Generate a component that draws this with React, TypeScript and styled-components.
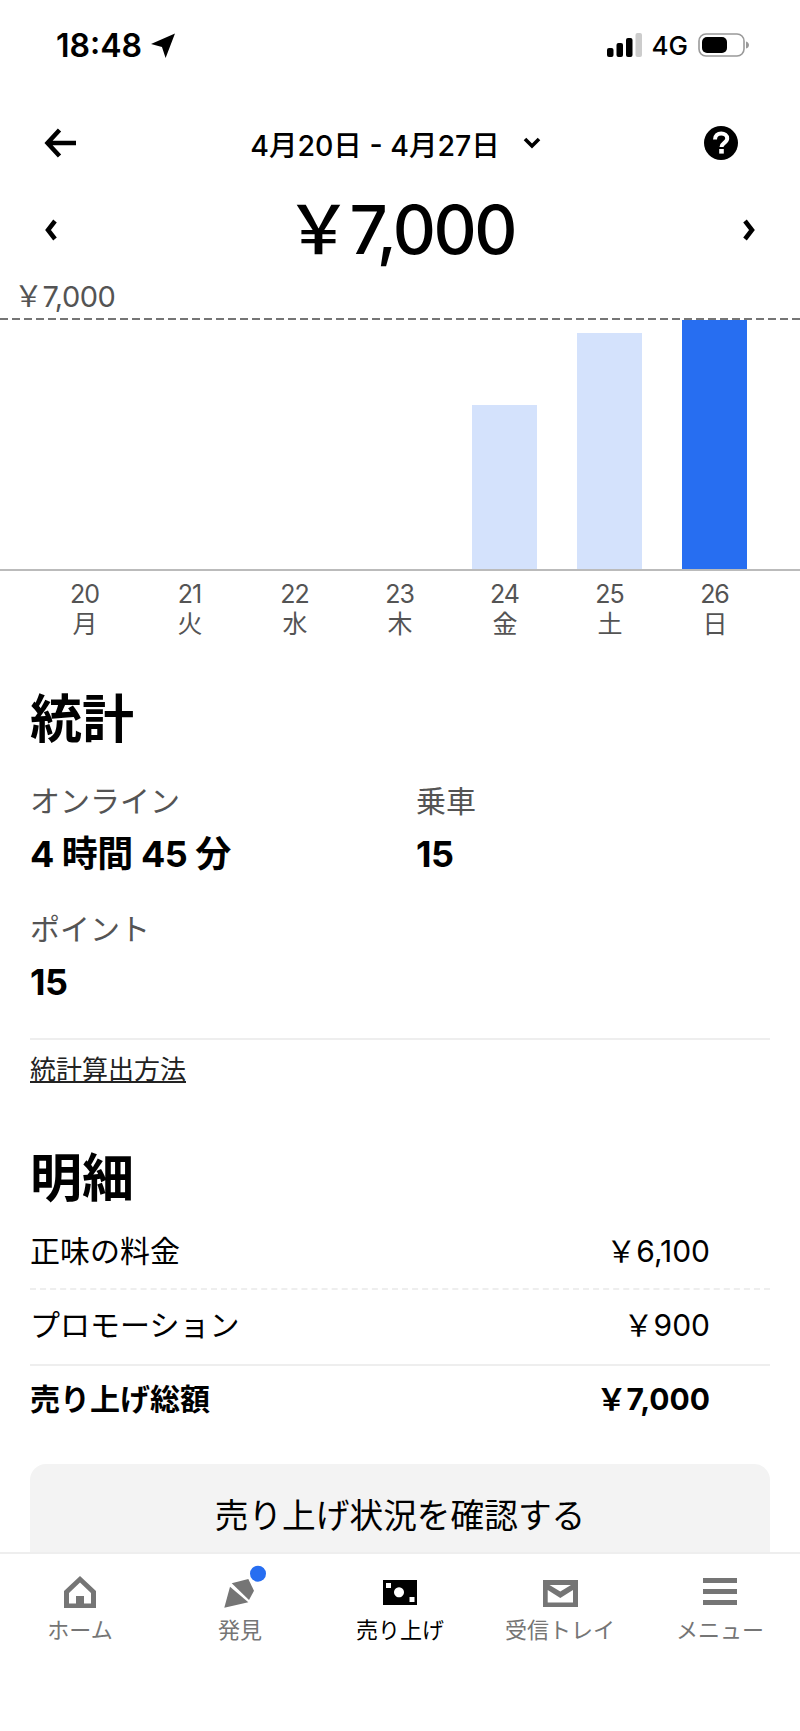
import styled, { createGlobalStyle } from "styled-components";

const YEN = "\uFFE5";
const days = [
  { num: "20", label: "月", value: 0, active: false },
  { num: "21", label: "火", value: 0, active: false },
  { num: "22", label: "水", value: 0, active: false },
  { num: "23", label: "木", value: 0, active: false },
  { num: "24", label: "金", value: 164, active: false },
  { num: "25", label: "土", value: 236, active: false },
  { num: "26", label: "日", value: 249, active: true },
];

const GlobalStyle = createGlobalStyle`
  html, body {
    margin: 0;
    padding: 0;
    background: #fff;
  }
  body {
    font-family: Inter, "Noto Sans CJK JP", sans-serif;
    color: #000;
  }
`;

function HomeIcon() {
  return (
    <svg width="32" height="40" viewBox="0 0 32 40">
      <path fillRule="evenodd" fill="#757575" d="M16 6 32 21V38H0V21ZM16 12.500 5 23V33.500H12V26H20V33.500H27V23Z" />
    </svg>
  );
}

function DiscoverIcon() {
  return (
    <svg width="52" height="46" viewBox="0 0 52 46">
      <path fill="#757575" d="M17.700 19.300 34.300 15 40 26.700 35 36Z" />
      <path fill="#757575" d="M16 22.700 34.300 38.300 10.300 43.700Z" />
      <circle cx="44" cy="9.700" r="8" fill="#276ef1" />
    </svg>
  );
}

function EarningsIcon() {
  return (
    <svg width="34" height="40" viewBox="0 0 34 40">
      <path
        fillRule="evenodd"
        d="M0 10H34V35H0ZM3 13V18H8V13ZM16 17.300a5 5 0 1 0 .01 0ZM26.500 27V32H31.500V27Z"
      />
    </svg>
  );
}

function InboxIcon() {
  return (
    <svg width="35" height="40" viewBox="0 0 35 40">
      <path
        fillRule="evenodd"
        fill="#757575"
        d="M0 10H35V37H0ZM6.500 15 17.300 21.500 28 15ZM4.700 20V32.500H30V20L17.300 28Z"
      />
    </svg>
  );
}

function MenuIcon() {
  return (
    <svg width="34" height="40" viewBox="0 0 34 40">
      <path fill="#757575" d="M0 8H34V13H0ZM0 19H34V24H0ZM0 30H34V35H0Z" />
    </svg>
  );
}

const navItems = [
  { label: "ホーム", icon: <HomeIcon /> },
  { label: "発見", icon: <DiscoverIcon /> },
  { label: "売り上げ", icon: <EarningsIcon />, active: true },
  { label: "受信トレイ", icon: <InboxIcon /> },
  { label: "メニュー", icon: <MenuIcon /> },
];

export default function App() {
  return (
    <Page>
      <GlobalStyle />
      <StatusBar>
        <Clock>
          18:48
          <svg width="26" height="25" viewBox="0 0 24 24">
            <path d="M23.500 .5 .5 10.500 11 13.500 14.500 24Z" />
          </svg>
        </Clock>
        <StatusRight>
          <svg width="35" height="24" viewBox="0 0 35 24">
            <rect x="0" y="15" width="6.500" height="9" rx="2" />
            <rect x="9.500" y="10" width="6.500" height="14" rx="2" />
            <rect x="19" y="5" width="6.500" height="19" rx="2" />
            <rect x="28.500" y="0" width="6.500" height="24" rx="2" fill="#ccc" />
          </svg>
          <NetworkLabel>4G</NetworkLabel>
          <svg width="52" height="24" viewBox="0 0 52 24">
            <rect x="1" y="1" width="45" height="22" rx="7" fill="none" stroke="#999" strokeWidth="1.6" />
            <rect x="4" y="4" width="25" height="16" rx="5" />
            <path d="M48 8.500c2 .5 3 2 3 3.500s-1 3-3 3.500Z" fill="#999" />
          </svg>
        </StatusRight>
      </StatusBar>

      <Header>
        <svg width="32" height="30" viewBox="0 0 32 30">
          <path d="M15.500 2 3.500 15 15.500 28M5 15H32" fill="none" stroke="#000" strokeWidth="4.500" />
        </svg>
        <DateRange>
          4月20日 - 4月27日
          <svg width="18" height="12" viewBox="0 0 18 12">
            <path d="M2 2 9 9 16 2" fill="none" stroke="#000" strokeWidth="3.600" />
          </svg>
        </DateRange>
        <svg width="36" height="36" viewBox="0 0 36 36">
          <circle cx="18" cy="18" r="17" />
          <path d="M12 14.500c0-3.800 2.700-6 6.200-6 3.400 0 6 2.100 6 5 0 4.300-5.700 4.500-5.700 8.500" fill="none" stroke="#fff" strokeWidth="4" />
          <rect x="16.200" y="24" width="4.600" height="4.600" fill="#fff" />
        </svg>
      </Header>

      <AmountRow>
        <svg width="14" height="22" viewBox="0 0 14 22">
          <path d="M11 2 4 11 11 20" fill="none" stroke="#000" strokeWidth="4.500" />
        </svg>
        <Amount>{YEN}7,000</Amount>
        <svg width="14" height="22" viewBox="0 0 14 22">
          <path d="M3 2 10 11 3 20" fill="none" stroke="#000" strokeWidth="4.500" />
        </svg>
      </AmountRow>

      <ChartLabel>{YEN}7,000</ChartLabel>
      <Plot>
        {days.map((d) => (
          <BarSlot key={d.num}>
            {d.value > 0 && <Bar $height={d.value} $active={d.active} />}
          </BarSlot>
        ))}
      </Plot>
      <Axis>
        {days.map((d) => (
          <AxisCell key={d.num}>
            <span>{d.num}</span>
            <span>{d.label}</span>
          </AxisCell>
        ))}
      </Axis>

      <Section $top={51}>
        <SectionTitle>統計</SectionTitle>
        <StatsGrid>
          <Stat>
            <StatLabel>オンライン</StatLabel>
            <StatValue>4 時間 45 分</StatValue>
          </Stat>
          <Stat>
            <StatLabel>乗車</StatLabel>
            <StatValue>15</StatValue>
          </Stat>
          <Stat>
            <StatLabel>ポイント</StatLabel>
            <StatValue>15</StatValue>
          </Stat>
        </StatsGrid>
        <Divider />
        <StatsLink>統計算出方法</StatsLink>
      </Section>

      <Section $top={61}>
        <SectionTitle>明細</SectionTitle>
        <Breakdown>
          <BreakdownRow $height={73} $line="dashed">
            <span>正味の料金</span>
            <span>{YEN}6,100</span>
          </BreakdownRow>
          <BreakdownRow $height={76} $line="solid">
            <span>プロモーション</span>
            <span>{YEN}900</span>
          </BreakdownRow>
          <BreakdownRow $height={69} $bold>
            <span>売り上げ総額</span>
            <span>{YEN}7,000</span>
          </BreakdownRow>
        </Breakdown>
        <StatusButton>売り上げ状況を確認する</StatusButton>
      </Section>

      <BottomNav>
        {navItems.map((item) => (
          <NavItem key={item.label} $active={item.active}>
            <NavIcon>{item.icon}</NavIcon>
            {item.label}
          </NavItem>
        ))}
      </BottomNav>
    </Page>
  );
}

const Page = styled.div`
  position: relative;
  width: 800px;
  height: 1731px;
  overflow: hidden;
  background: #fff;
`;

const StatusBar = styled.div`
  display: flex;
  align-items: center;
  justify-content: space-between;
  height: 90px;
  padding: 0 50px 0 56px;
`;

const Clock = styled.div`
  display: flex;
  align-items: center;
  gap: 8px;
  font-size: 32px;
  font-weight: 600;
`;

const StatusRight = styled.div`
  display: flex;
  align-items: center;
  gap: 10px;
`;

const NetworkLabel = styled.span`
  font-size: 26px;
  font-weight: 500;
`;

const Header = styled.div`
  display: flex;
  align-items: center;
  justify-content: space-between;
  height: 106px;
  padding: 0 61px 0 44px;
`;

const DateRange = styled.div`
  display: flex;
  align-items: center;
  gap: 23px;
  margin-left: 12px;
  font-size: 28.5px;
  font-weight: 500;
`;

const AmountRow = styled.div`
  display: flex;
  align-items: center;
  justify-content: space-between;
  height: 68px;
  padding: 0 44px;
`;

const Amount = styled.div`
  font-size: 67px;
  font-weight: 500;
  line-height: 68px;
  letter-spacing: -2.5px;
`;

const ChartLabel = styled.div`
  height: 38px;
  padding: 16px 0 0 14px;
  font-size: 29px;
  line-height: 34px;
  letter-spacing: -0.5px;
  color: #545454;
`;

const Plot = styled.div`
  display: grid;
  grid-template-columns: repeat(7, 105px);
  align-items: end;
  height: 249px;
  padding: 2px 0 0 32px;
  border-bottom: 2px solid #bbb;
  background: repeating-linear-gradient(90deg, #757575 0 8px, transparent 8px 12px) top / 100% 2px no-repeat;
`;

const BarSlot = styled.div`
  display: flex;
  justify-content: center;
`;

const Bar = styled.div<{ $height: number; $active: boolean }>`
  width: 65px;
  height: ${(p) => p.$height}px;
  background: ${(p) => (p.$active ? "#276ef1" : "#d4e2fc")};
`;

const Axis = styled.div`
  display: grid;
  grid-template-columns: repeat(7, 105px);
  padding: 8px 0 0 32px;
`;

const AxisCell = styled.div`
  display: flex;
  flex-direction: column;
  align-items: center;
  font-size: 25px;
  line-height: 30px;
  letter-spacing: -1px;
  color: #545454;
`;

const Section = styled.section<{ $top: number }>`
  margin-top: ${(p) => p.$top}px;
  padding: 0 30px;
`;

const SectionTitle = styled.h2`
  margin: 0;
  font-size: 52px;
  font-weight: 700;
  line-height: 60px;
`;

const StatsGrid = styled.div`
  display: grid;
  grid-template-columns: 386px 1fr;
  row-gap: 33px;
  margin-top: 31px;
`;

const Stat = styled.div`
  display: flex;
  flex-direction: column;
  gap: 11px;
`;

const StatLabel = styled.span`
  font-size: 30px;
  line-height: 40px;
  color: #545454;
`;

const StatValue = styled.span`
  font-size: 36px;
  font-weight: 700;
  line-height: 44px;
  letter-spacing: -0.5px;
`;

const Divider = styled.div`
  height: 2px;
  margin-top: 34px;
  background: #eee;
`;

const StatsLink = styled.a`
  display: inline-block;
  margin-top: 12px;
  font-size: 26px;
  line-height: 36px;
  color: #222;
  text-decoration: underline;
`;

const Breakdown = styled.div`
  display: flex;
  flex-direction: column;
  margin-top: 8px;
`;

const BreakdownRow = styled.div<{ $height: number; $line?: string; $bold?: boolean }>`
  display: flex;
  align-items: center;
  justify-content: space-between;
  box-sizing: border-box;
  height: ${(p) => p.$height}px;
  padding: 0 60px 8px 0;
  font-size: 30px;
  font-weight: ${(p) => (p.$bold ? 700 : 400)};
  border-bottom: ${(p) => (p.$line ? `2px ${p.$line} #eee` : "none")};
`;

const StatusButton = styled.button`
  display: block;
  width: 100%;
  height: 104px;
  margin-top: 29px;
  padding: 0 0 6px;
  border: none;
  border-radius: 16px;
  background: #f3f3f3;
  color: #000;
  font-family: inherit;
  font-size: 33.7px;
`;

const BottomNav = styled.nav`
  position: absolute;
  left: 0;
  right: 0;
  bottom: 0;
  display: grid;
  grid-template-columns: repeat(5, 160px);
  box-sizing: border-box;
  height: 179px;
  border-top: 2px solid #eee;
  background: #fff;
`;

const NavItem = styled.div<{ $active?: boolean }>`
  display: flex;
  flex-direction: column;
  align-items: center;
  font-size: 22px;
  line-height: 30px;
  color: ${(p) => (p.$active ? "#000" : "#757575")};
`;

const NavIcon = styled.div`
  display: flex;
  align-items: flex-end;
  justify-content: center;
  height: 40px;
  margin: 16px 0 5px;
`;
